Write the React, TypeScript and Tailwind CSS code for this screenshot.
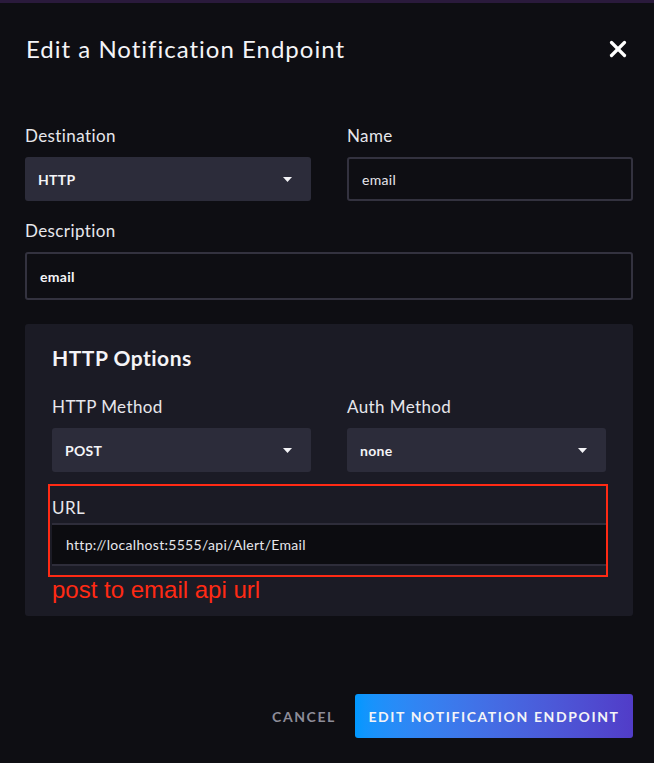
import { X } from "lucide-react";

const font = { fontFamily: "Lato, 'Open Sans', sans-serif" };

function Caret() {
  return (
    <svg width="9" height="5" viewBox="0 0 9 5" className="shrink-0">
      <path d="M0 0h9L4.5 5z" fill="#f4f4f7" />
    </svg>
  );
}

function Select({ value }: { value: string }) {
  return (
    <div className="flex h-[44px] items-center justify-between rounded-[3px] bg-[#2c2c3a] pl-[13px] pr-[19px]">
      <span className="text-[14px] font-bold tracking-[0.3px] text-[#f4f4f7]">{value}</span>
      <Caret />
    </div>
  );
}

function Label({ children }: { children: string }) {
  return (
    <div className="mb-[11px] h-[20px] text-[17px] leading-[20px] tracking-[0.4px] text-[#e7e7ec]">{children}</div>
  );
}

export default function App() {
  return (
    <div
      className="h-[763px] w-[654px] overflow-hidden border-t-[3px] border-[#2a1a3c] bg-[#0e0e13] pl-[25px] pr-[21px]"
      style={font}
    >
      <div className="flex h-[94px] items-center justify-between pb-[2px]">
        <h1 className="pl-px text-[24px] font-normal tracking-[1px] text-[#f4f4f7]">Edit a Notification Endpoint</h1>
        <X className="mr-[2px] h-[26px] w-[26px] text-white" strokeWidth={3} />
      </div>

      <div className="mt-[29px] grid grid-cols-2 gap-x-[36px]">
        <div>
          <Label>Destination</Label>
          <Select value="HTTP" />
        </div>
        <div>
          <Label>Name</Label>
          <div className="flex h-[44px] items-center rounded-[3px] border-2 border-[#33323f] pl-[13px] text-[14px] tracking-[0.3px] text-[#e7e7ec]">
            email
          </div>
        </div>
      </div>

      <div className="mt-[20px]">
        <Label>Description</Label>
        <div className="flex h-[48px] items-center rounded-[3px] border-2 border-[#33323f] pl-[13px] text-[14px] font-bold tracking-[0.3px] text-[#f4f4f7]">
          email
        </div>
      </div>

      <div className="mt-[24px] h-[292px] rounded-[3px] bg-[#1b1b25] px-[27px] pt-[21px]">
        <h2 className="h-[26px] text-[21px] font-bold leading-[26px] tracking-[0.5px] text-[#f4f4f7]">HTTP Options</h2>
        <div className="mt-[26px] grid grid-cols-2 gap-x-[36px]">
          <div>
            <Label>HTTP Method</Label>
            <Select value="POST" />
          </div>
          <div>
            <Label>Auth Method</Label>
            <Select value="none" />
          </div>
        </div>

        <div className="relative mt-[26px]">
          <div className="h-[20px] text-[17px] leading-[20px] tracking-[0.4px] text-[#e7e7ec]">URL</div>
          <div className="mt-[5px] flex h-[43px] items-center border-y-2 border-[#2e2d3a] bg-[#0c0c10] pl-[14px] text-[14px] tracking-[0.3px] text-[#e7e7ec]">
            http://localhost:5555/api/Alert/Email
          </div>
          <div className="pointer-events-none absolute -top-[14px] -left-[4px] -right-[2px] h-[93px] border-2 border-[#ff2a14]" />
          <div
            className="mt-[10px] text-[24px] leading-[28px] text-[#ff2a14]"
            style={{ fontFamily: "'Liberation Sans', Arial, sans-serif" }}
          >
            post to email api url
          </div>
        </div>
      </div>

      <div className="mt-[78px] flex items-center justify-end gap-[19px]">
        <span className="text-[14px] font-bold tracking-[1.6px] text-[#8d8c98]">CANCEL</span>
        <button className="h-[44px] w-[278px] rounded-[3px] bg-gradient-to-r from-[#0098ff] to-[#513cc8] text-[14px] font-bold tracking-[1.6px] text-[#f4f4f7]">
          EDIT NOTIFICATION ENDPOINT
        </button>
      </div>
    </div>
  );
}
